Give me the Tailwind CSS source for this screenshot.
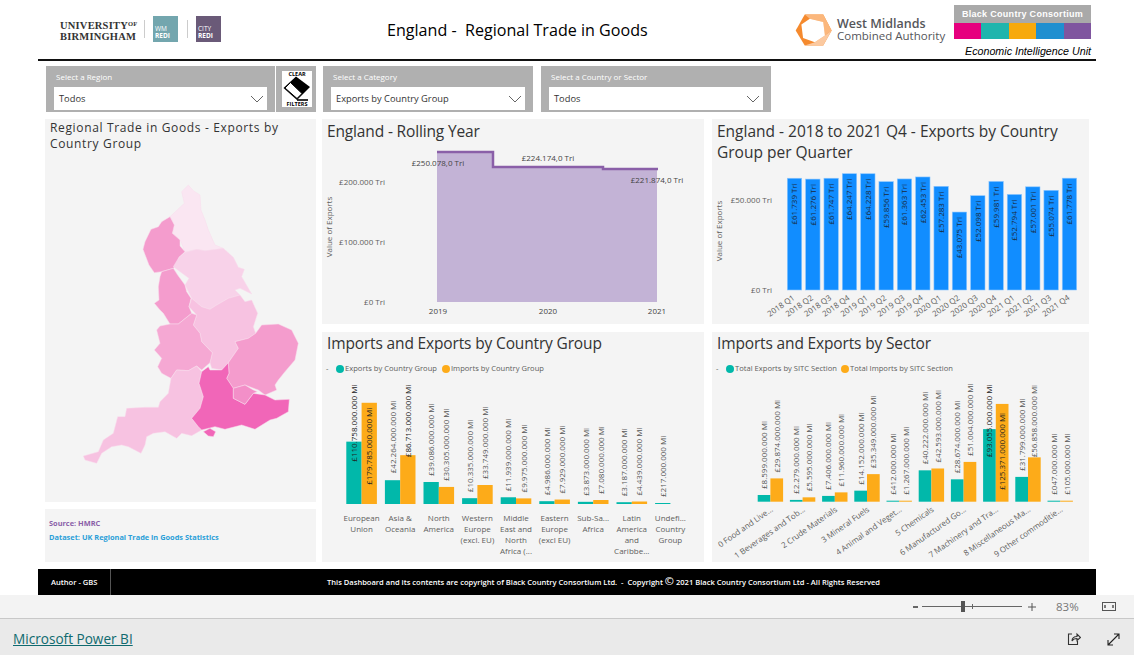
<!DOCTYPE html>
<html lang="en">
<head>
    <meta charset="UTF-8">
    <meta name="viewport" content="width=device-width, initial-scale=1.0">
    <title>England - Regional Trade in Goods</title>
    <script src="https://cdn.jsdelivr.net/npm/@tailwindcss/browser@4"></script>
</head>
<body class="bg-white">
<div class="w-[1134px] h-[655px] flex flex-col overflow-hidden font-['Open_Sans',sans-serif] text-[#252423]">

    <!-- report canvas -->
    <div class="w-[1058px] h-[595px] ml-[38px] shrink-0 flex flex-col">

        <!-- header -->
        <header class="h-[59px] flex items-start shrink-0">
            <div class="w-[90px] ml-[22px] mt-[18px] font-['Liberation_Serif',serif] text-[10.5px] leading-[11px] font-bold text-[#333] tracking-[0.2px]">
                <div>UNIVERSITY<span class="text-[6.5px] align-[3px]">OF</span></div>
                <div>BIRMINGHAM</div>
            </div>
            <div class="w-px h-[18px] bg-[#ccc] mt-[20px] -ml-[6px]"></div>
            <div class="w-[25px] h-[26px] ml-[8px] mt-[16px] bg-[#73a6ae] text-white text-[6.5px] leading-[7px] pl-[2px] pt-[9px]">WM<div class="font-bold">REDI</div></div>
            <div class="w-px h-[18px] bg-[#ccc] mt-[20px] ml-[9px]"></div>
            <div class="w-[25px] h-[26px] ml-[8px] mt-[16px] bg-[#6a5a78] text-white text-[6.5px] leading-[7px] pl-[2px] pt-[9px]">CITY<div class="font-bold">REDI</div></div>
            <h1 class="ml-[166px] mt-[18px] w-[406px] text-[16.1px] leading-[25px] text-black whitespace-pre">England -  Regional Trade in Goods</h1>
            <svg class="mt-[12px] shrink-0" width="42" height="36" viewBox="100 35 125 107">
                <polygon points="135,42 190,42 215,90 190,135 135,135 108,90" fill="#f58a2e"/>
                <polygon points="135,42 190,42 215,90 195,105 190,65 150,55" fill="#fbb77c"/>
                <polygon points="215,90 190,135 135,135 165,125 195,105" fill="#fbc9a0"/>
                <polygon points="150,55 190,65 195,105 165,125 130,112 125,72" fill="#fff"/>
            </svg>
            <div class="ml-[2px] mt-[18px] w-[115px] leading-[12px] text-[#55565a] whitespace-nowrap">
                <div class="font-semibold text-[12.5px]">West Midlands</div>
                <div class="text-[11.5px]">Combined Authority</div>
            </div>
            <div class="ml-[2px] mt-[5px] w-[137px] font-['Liberation_Sans',sans-serif]">
                <div class="h-[18px] bg-[#a9a9a9] text-white text-[9px] leading-[18px] font-bold text-center tracking-[0.3px]">Black Country Consortium</div>
                <div class="h-[16px] flex">
                    <div class="flex-1 bg-[#e6007e]"></div>
                    <div class="flex-1 bg-[#1fb5ad]"></div>
                    <div class="flex-1 bg-[#f7a90c]"></div>
                    <div class="flex-1 bg-[#1f8fd0]"></div>
                    <div class="flex-1 bg-[#7f559f]"></div>
                </div>
                <div class="mt-[5px] text-[10.7px] leading-[14px] italic text-right text-black whitespace-nowrap">Economic Intelligence Unit</div>
            </div>
        </header>
        <div class="h-[2px] bg-[#111] shrink-0"></div>

        <!-- slicers -->
        <div class="flex mt-[5px] ml-[8px] h-[46px] shrink-0">
            <div class="w-[229px] bg-[#b0b0b0] px-[8px] pt-[5px]">
                <div class="pl-[2px] text-[8px] leading-[11px] text-white">Select a Region</div>
                <div class="mt-[5px] h-[23px] bg-white flex items-center justify-between pl-[5px] pr-[3px] pt-[1px] text-[9.3px] text-[#333]">
                    <span>Todos</span>
                    <svg width="14" height="8" viewBox="0 0 14 8" fill="none" stroke="#666"><path d="M1 1l6 6 6-6"/></svg>
                </div>
            </div>
            <div class="w-[40px] ml-[1px] bg-[#b0b0b0] pl-[6px] pr-[4px] py-[5px]">
                <svg width="30" height="36" viewBox="0 0 30 36" class="bg-white">
                    <text x="15" y="5" text-anchor="middle" font-size="5.5" font-weight="700" fill="#000">CLEAR</text>
                    <polygon points="1.5,17 14,5.5 28,16 15,29" fill="#000"/>
                    <polygon points="3,17 8.5,11.5 20,22.5 15,27.5" fill="#fff" stroke="#000" stroke-width="1"/>
                    <path d="M15 29h11" stroke="#000" stroke-width="1.6"/>
                    <text x="15" y="35" text-anchor="middle" font-size="5.5" font-weight="700" fill="#000">FILTERS</text>
                </svg>
            </div>
            <div class="w-[210px] ml-[7px] bg-[#b0b0b0] px-[8px] pt-[5px]">
                <div class="pl-[2px] text-[8px] leading-[11px] text-white">Select a Category</div>
                <div class="mt-[5px] h-[23px] bg-white flex items-center justify-between pl-[5px] pr-[3px] pt-[1px] text-[9.3px] text-[#333]">
                    <span>Exports by Country Group</span>
                    <svg width="14" height="8" viewBox="0 0 14 8" fill="none" stroke="#666"><path d="M1 1l6 6 6-6"/></svg>
                </div>
            </div>
            <div class="w-[230px] ml-[8px] bg-[#b0b0b0] px-[8px] pt-[5px]">
                <div class="pl-[2px] text-[8px] leading-[11px] text-white">Select a Country or Sector</div>
                <div class="mt-[5px] h-[23px] bg-white flex items-center justify-between pl-[5px] pr-[3px] pt-[1px] text-[9.3px] text-[#333]">
                    <span>Todos</span>
                    <svg width="14" height="8" viewBox="0 0 14 8" fill="none" stroke="#666"><path d="M1 1l6 6 6-6"/></svg>
                </div>
            </div>
        </div>

        <!-- visuals -->
        <div class="flex mt-[7px] ml-[7px] h-[443px] shrink-0">
            <div class="w-[271px] flex flex-col gap-[7px]">
                <div class="h-[383px] bg-[#f4f4f4]">
                    <h2 class="h-[51px] pl-[5px] pt-[1px] text-[12px] leading-[16px] tracking-[0.65px] text-[#333]">Regional Trade in Goods - Exports by Country Group</h2>
                    <svg width="270" height="330" viewBox="0 0 810 990" stroke="#f9dcec" stroke-width="1.5" stroke-linejoin="round">
                        <polygon fill="#fae6f2" points="430,45 445,62 465,75 468,120 480,150 490,180 510,225 535,235 510,240 480,242 455,238 420,247 408,215 385,190 382,150 375,140 418,100 410,65"/>
                        <polygon fill="#f49ccd" points="375,140 388,165 382,190 405,210 405,228 420,245 402,262 398,280 385,295 350,305 328,308 312,285 294,238 300,215 318,178 340,170 350,155"/>
                        <polygon fill="#f49ccd" points="385,295 398,315 420,345 425,365 438,385 432,410 440,430 400,462 375,462 355,430 345,420 328,400 342,390 340,350 345,320 350,305"/>
                        <polygon fill="#f8d2e9" points="535,235 565,262 580,292 598,298 590,320 620,372 585,355 570,360 585,375 550,385 510,408 495,418 470,410 440,385 420,345 432,325 385,290 402,262 420,247 455,238 480,242"/>
                        <polygon fill="#f7c2e1" points="440,385 470,410 495,418 510,408 550,385 585,375 600,395 620,390 638,430 625,470 632,490 610,505 570,515 580,535 550,578 530,600 500,595 495,578 502,548 470,515 465,490 445,465 455,435 432,410"/>
                        <polygon fill="#f5a8d3" points="440,430 455,435 445,465 465,490 470,515 502,548 495,578 470,600 455,588 430,602 395,600 378,625 350,610 338,590 350,565 328,540 345,520 335,480 345,468 375,462 400,462"/>
                        <polygon fill="#f7c2e1" points="395,600 430,602 455,588 470,605 462,640 475,680 465,715 440,745 460,770 470,780 440,797 410,790 395,805 360,785 325,790 305,800 300,825 288,850 250,830 230,825 200,830 170,850 155,880 120,870 115,858 160,845 175,810 205,790 218,740 240,740 245,715 300,712 340,712 345,695 370,670 378,625"/>
                        <polygon fill="#f49ccd" points="570,515 610,505 632,490 650,465 700,462 740,480 760,520 750,570 720,605 700,630 690,645 695,660 660,675 640,660 600,645 565,655 545,625 552,610 550,578 580,535"/>
                        <polygon fill="#f166b8" points="470,605 490,590 495,600 530,600 550,578 552,610 545,625 565,655 565,685 600,703 625,670 660,675 690,690 733,688 730,725 695,745 675,750 630,778 590,765 540,778 510,770 470,780 460,770 440,745 465,715 475,680 462,640"/>
                        <polygon fill="#f166b8" points="475,785 495,775 512,785 505,800 490,798"/>
                        <polygon fill="#f38fc8" points="565,655 600,645 625,660 637,665 625,670 600,703 565,685"/>
                    </svg>
                </div>
                <div class="h-[53px] bg-[#f4f4f4] pl-[4px] pt-[7px] text-[7.4px] leading-[14px] font-bold">
                    <div class="text-[#8a5fa8]">Source: HMRC</div>
                    <div class="text-[#2b9fd8]">Dataset: UK Regional Trade in Goods Statistics</div>
                </div>
            </div>

            <div class="ml-[6px] grid grid-cols-[382px_377px] grid-rows-[205px_230px] gap-[8px]">
                <section class="bg-[#f4f4f4]">
                    <h2 class="h-[26px] pl-[5px] text-[15.5px] tracking-[-0.15px] leading-[24px] text-[#333]">England - Rolling Year</h2>
                    <svg id="rolling" class="block" width="382" height="179" viewBox="322 145 382 179"></svg>
                </section>
                <section class="bg-[#f4f4f4]">
                    <h2 class="h-[47px] pl-[5px] pt-[2px] text-[15.5px] leading-[21px] text-[#333]">England - 2018 to 2021 Q4 - Exports by Country Group per Quarter</h2>
                    <svg id="quarters" class="block" width="377" height="158" viewBox="712 166 377 158"></svg>
                </section>
                <section class="bg-[#f4f4f4]">
                    <h2 class="h-[29px] pl-[5px] text-[15.5px] tracking-[-0.15px] leading-[22px] text-[#333]">Imports and Exports by Country Group</h2>
                    <div class="h-[14px] flex items-center pl-[4px] pt-[2px] text-[7.6px] text-[#605e5c] whitespace-nowrap">
                        <span class="w-[10px]">-</span>
                        <span class="w-2 h-2 rounded-full bg-[#01b8aa]"></span><span class="ml-[1px] w-[97px]">Exports by Country Group</span>
                        <span class="w-2 h-2 rounded-full bg-[#fdab19]"></span><span class="ml-[1px]">Imports by Country Group</span>
                    </div>
                    <svg id="countries" class="block" width="382" height="187" viewBox="322 375 382 187"></svg>
                </section>
                <section class="bg-[#f4f4f4]">
                    <h2 class="h-[29px] pl-[5px] text-[15.5px] tracking-[-0.15px] leading-[22px] text-[#333]">Imports and Exports by Sector</h2>
                    <div class="h-[14px] flex items-center pl-[4px] pt-[2px] text-[7.6px] text-[#605e5c] whitespace-nowrap">
                        <span class="w-[10px]">-</span>
                        <span class="w-2 h-2 rounded-full bg-[#01b8aa]"></span><span class="ml-[1px] w-[106px]">Total Exports by SITC Section</span>
                        <span class="w-2 h-2 rounded-full bg-[#fdab19]"></span><span class="ml-[1px]">Total Imports by SITC Section</span>
                    </div>
                    <svg id="sectors" class="block" width="377" height="187" viewBox="712 375 377 187"></svg>
                </section>
            </div>
        </div>

        <!-- footer strip -->
        <div class="h-[26px] mt-[7px] bg-black text-white flex items-center text-[7.55px] font-semibold shrink-0">
            <div class="w-[73px] h-full border-r border-[#555] pl-[13px] leading-[26px]">Author - GBS</div>
            <div class="ml-[216px] whitespace-pre">This Dashboard and its contents are copyright of Black Country Consortium Ltd.  -  Copyright <span class="text-[11px] leading-none">©</span> 2021 Black Country Consortium Ltd - All Rights Reserved</div>
        </div>
    </div>

    <!-- zoom bar -->
    <div class="h-[24px] bg-[#f3f3f3] border-b border-[#c8c8c8] flex items-center shrink-0 text-[#666]">
        <span class="ml-[913px] w-[5px] h-[2px] bg-[#666]"></span>
        <div class="ml-[4px] w-[100px] h-px bg-[#666] flex items-center">
            <span class="ml-[39px] w-[4px] h-[11px] bg-[#555]"></span>
            <span class="ml-[7px] w-px h-[5px] bg-[#666]"></span>
        </div>
        <svg class="ml-[6px]" width="8" height="8" viewBox="0 0 8 8" stroke="#555"><path d="M0 4h8M4 0v8"/></svg>
        <span class="ml-[20px] w-[46px] text-[11.5px] text-[#777]">83%</span>
        <svg width="14" height="9" viewBox="0 0 14 9" fill="none" stroke="#555"><rect x=".5" y=".5" width="13" height="8"/><path d="M3 3v3M11 3v3" stroke-width="1.5"/></svg>
    </div>

    <!-- power bi footer -->
    <div class="flex-1 bg-[#eaeaea] flex items-center pt-[4px]">
        <a href="#" class="ml-[13px] w-[120px] text-[13.6px] text-[#0f6a6f] underline whitespace-nowrap">Microsoft Power BI</a>
        <svg class="ml-[934px]" width="14" height="14" viewBox="0 0 14 14" fill="none" stroke="#333" stroke-width="1.1"><path d="M5 2H1.5v10.5h9V9"/><path d="M5 9c0-3 2-4.500 5-4.500V2l3.500 3.500L10 8.500V6.500c-2 0-4 .5-5 2.500z"/></svg>
        <svg class="ml-[26px]" width="13" height="13" viewBox="0 0 13 13" fill="none" stroke="#222" stroke-width="1.1"><path d="M1 12L12 1M7 1h5v5M1 7v5h5"/></svg>
    </div>
</div>

<script>
    var GREY = "#605e5c";

    function label(x, y, str, opts) {
        opts = opts || {};
        var rot = opts.rotate ? ' transform="rotate(' + opts.rotate + ' ' + x + ' ' + y + ')"' : "";
        return '<text x="' + x + '" y="' + y + '" font-size="' + (opts.size || 8) + '" fill="' + (opts.fill || GREY) +
            '" text-anchor="' + (opts.anchor || "middle") + '"' + rot + '>' + str + '</text>';
    }

    // rolling year area chart
    var rolling = '<path d="M437 152H493V167H603V169H657V302H437Z" fill="#c3b3d6"/>' +
        '<path d="M437 152H493V167H603V169H658" fill="none" stroke="#8a5fa8" stroke-width="2.5"/>';
    [["£200.000 Tri", 185], ["£100.000 Tri", 245], ["£0 Tri", 305]].forEach(function (t) {
        rolling += label(385, t[1], t[0], { anchor: "end" });
    });
    [["2019", 438], ["2020", 548], ["2021", 657]].forEach(function (t) {
        rolling += label(t[1], 314, t[0], { fill: "#444" });
    });
    rolling += label(332, 227, "Value of Exports", { rotate: -90 });
    rolling += label(438, 166, "£250.078,0 Tri", { fill: "#444" });
    rolling += label(548, 161, "£224.174,0 Tri", { fill: "#444" });
    rolling += label(657, 183, "£221.874,0 Tri", { fill: "#444" });
    document.getElementById("rolling").innerHTML = rolling;

    // quarterly bars
    var quarters = [["2018 Q1", "61.739"], ["2018 Q2", "61.276"], ["2018 Q3", "61.747"], ["2018 Q4", "64.247"],
        ["2019 Q1", "64.228"], ["2019 Q2", "59.856"], ["2019 Q3", "61.363"], ["2019 Q4", "62.453"],
        ["2020 Q1", "57.283"], ["2020 Q2", "43.075"], ["2020 Q3", "52.098"], ["2020 Q4", "59.981"],
        ["2021 Q1", "52.794"], ["2021 Q2", "57.001"], ["2021 Q3", "55.074"], ["2021 Q4", "61.778"]];
    var q = label(772, 203, "£50.000 Tri", { anchor: "end" }) + label(772, 293, "£0 Tri", { anchor: "end" }) +
        label(722, 231, "Value of Exports", { rotate: -90 });
    quarters.forEach(function (d, i) {
        var x = 787.3 + i * 18.33;
        var top = 290 - parseFloat(d[1]) * 1.81;
        q += '<rect x="' + x + '" y="' + top + '" width="14.4" height="' + (290 - top) + '" fill="#118dff" stroke="#8cc6ff" stroke-width=".6"/>';
        q += label(x + 10, top + 5, "£" + d[1] + " Tri", { rotate: -90, anchor: "end", fill: "#1b2a3a" });
        q += label(x + 8, 299, d[0], { rotate: -35, anchor: "end" });
    });
    document.getElementById("quarters").innerHTML = q;

    // clustered columns: off = distance of a value label above its bar, negative runs into the bar
    function clustered(id, opts, rows) {
        var out = "";
        rows.forEach(function (r, i) {
            var x = opts.x0 + i * opts.step;
            [[r.v[0], "#01b8aa", x], [r.v[1], "#fdab19", x + opts.w]].forEach(function (b) {
                if (b[0] === null) return;
                var h = Math.max(parseFloat(b[0]) * opts.scale, 1);
                out += '<rect x="' + b[2] + '" y="' + (opts.base - h) + '" width="' + opts.w + '" height="' + h + '" fill="' + b[1] + '"/>';
            });
            [[r.v[0], x], [r.v[1], x + opts.w]].forEach(function (b, k) {
                if (b[0] === null) return;
                var h = Math.max(parseFloat(b[0]) * opts.scale, 1);
                var start = opts.base - h - (r.off && r.off[k] !== undefined ? r.off[k] : 6);
                var inside = r.off && r.off[k] < 0;
                var text = "£" + b[0].replace(/^0\./, "") + ".000.000 Mi";
                out += label(b[1] + opts.w / 2 + 3, start, text, { rotate: -90, anchor: "start", fill: inside ? "#222" : "#555" });
            });
            if (opts.rotated) {
                out += label(x + opts.w + 3, opts.base + 9, r.name, { rotate: -35, anchor: "end" });
            } else {
                r.name.forEach(function (line, n) {
                    out += label(x + opts.w, opts.base + 17 + n * 11, line);
                });
            }
        });
        document.getElementById(id).innerHTML = out;
    }

    clustered("countries", { x0: 346.3, step: 38.6, w: 15.3, base: 504, scale: 0.563 }, [
        { name: ["European", "Union"], v: ["110.758", "179.785"], off: [-20, -82] },
        { name: ["Asia &amp;", "Oceania"], v: ["42.264", "86.713"], off: [7, -2] },
        { name: ["North", "America"], v: ["39.086", "30.305"] },
        { name: ["Western", "Europe", "(excl. EU)"], v: ["10.335", "33.749"] },
        { name: ["Middle", "East and", "North", "Africa (..."], v: ["11.939", "9.975"] },
        { name: ["Eastern", "Europe", "(excl EU)"], v: ["4.986", "7.929"] },
        { name: ["Sub-Sa...", "Africa"], v: ["3.873", "7.080"] },
        { name: ["Latin", "America", "and", "Caribbe..."], v: ["3.187", "4.439"] },
        { name: ["Undefi...", "Country", "Group"], v: ["0.217", null] }
    ]);

    clustered("sectors", { x0: 757.7, step: 32.2, w: 12.7, base: 501.7, scale: 0.78, rotated: true }, [
        { name: "0 Food and Live...", v: ["8.599", "29.874"] },
        { name: "1 Beverages and Tob...", v: ["2.279", "5.595"] },
        { name: "2 Crude Materials", v: ["7.406", "11.960"] },
        { name: "3 Mineral Fuels", v: ["14.152", "35.349"] },
        { name: "4 Animal and Veget...", v: ["0.412", "1.267"] },
        { name: "5 Chemicals", v: ["40.222", "42.593"] },
        { name: "6 Manufactured Go...", v: ["28.674", "51.004"] },
        { name: "7 Machinery and Tra...", v: ["93.055", "125.371"], off: [-28, -86] },
        { name: "8 Miscellaneous Ma...", v: ["31.799", "56.858"], off: [6, 0] },
        { name: "9 Other commoditie...", v: ["0.047", "0.105"] }
    ]);
</script>
</body>
</html>
